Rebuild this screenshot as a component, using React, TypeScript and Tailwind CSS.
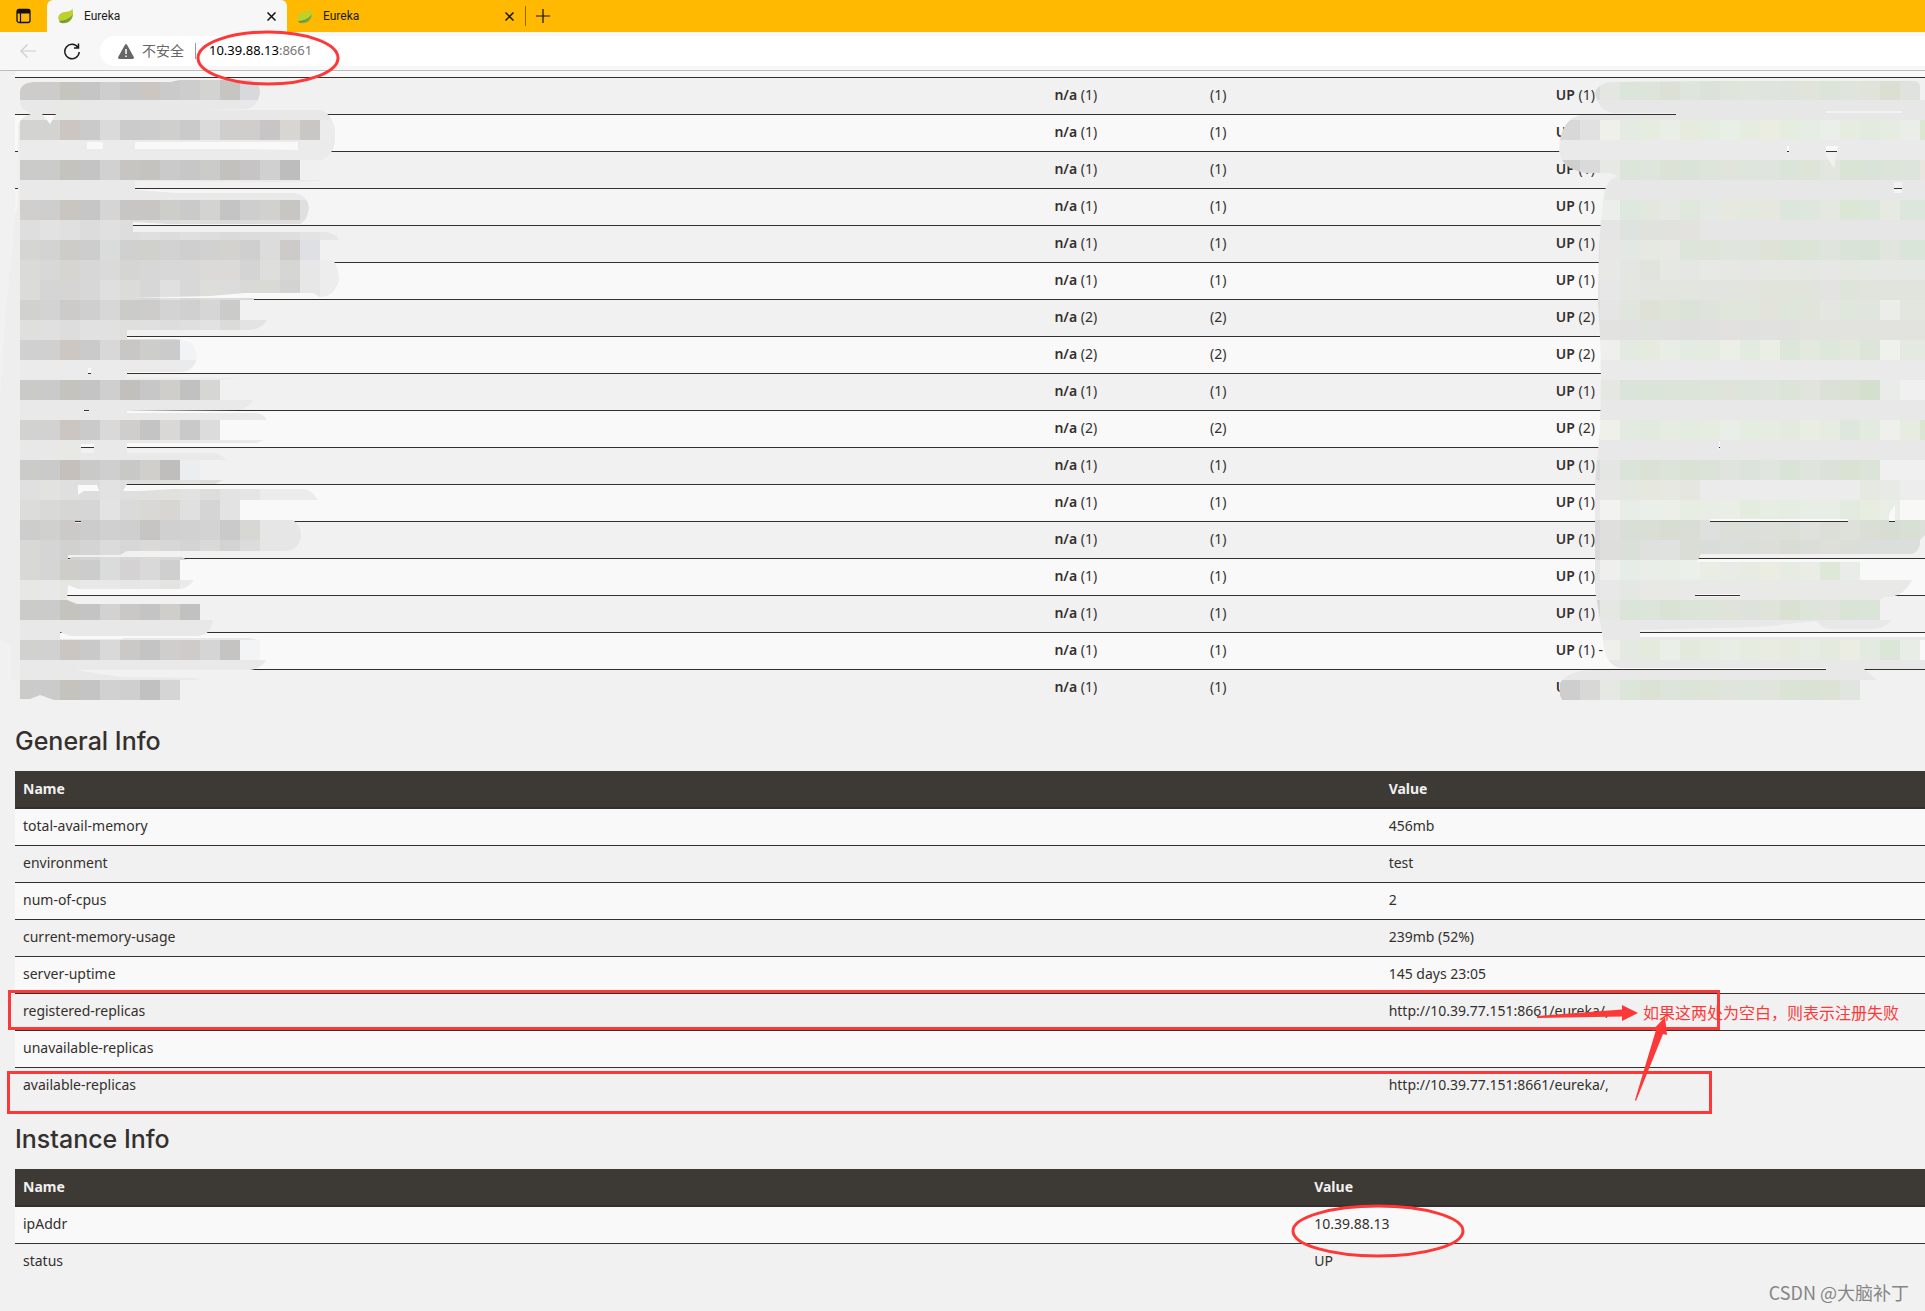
import type { ReactNode } from "react";

const instances = [1, 1, 1, 1, 1, 1, 2, 2, 1, 2, 1, 1, 1, 1, 1, 1, 1];

const generalInfo = [
  ["total-avail-memory", "456mb"],
  ["environment", "test"],
  ["num-of-cpus", "2"],
  ["current-memory-usage", "239mb (52%)"],
  ["server-uptime", "145 days 23:05"],
  ["registered-replicas", "http://10.39.77.151:8661/eureka/,"],
  ["unavailable-replicas", ""],
  ["available-replicas", "http://10.39.77.151:8661/eureka/,"],
];

const instanceInfo = [
  ["ipAddr", "10.39.88.13"],
  ["status", "UP"],
];

// One line per 20px band, starting at y = 80. The last colour runs on to the edge.
const namesMosaic = [
  "cdcccb cdcccb c5c4be c5c5c5 cecece c7c7c7 cbc6c2 cacaca cdcdcd d3d3d1 c7c5c2 d7d9dc",
  "e8e8e8 e8e8e8 e8e8e5 e8e8e8",
  "d3d3d2 d3d3d2 ccc6c2 cacaca dadada cbcbcb cccccc cfcfcd cacaca dadada cfcecc cfcecc c8c5c7 d7d6d3 c9c7c5 ececec",
  "ebebeb",
  "cbcbc9 cbcbca c5c3bd c4c4c4 d1d1d1 c6c5c2 c4c3c0 cacaca c7c7c7 cbcbca c3c1bd c7c4c6 d0d0d0 bdbdbd f0f0f0",
  "e9e9e9",
  "d0cfcd cecece c9c5c1 c6c6c6 d5d5d5 c8c6c4 c8c6c4 cdcdca cacaca d3d3d2 c4c4c4 cecece d1d1d0 c7c6c3 dddfe1",
  "dedede e2e2e2 e0e0e0 dcdcdc e0e0e0 dddddd dfdfdf dcdcdc dfdfdf dddddd dadada dcdcdc dddddd dedede e3e3e3 e6e6e6",
  "d5d5d4 d3d3d3 cdccc9 cdcdcd d9dcdb d0d0d0 d0d0cd d2d2d2 cfcfcf d1d1d1 d4d2ce cfcfcf dddcdd cdcbc9 dfe0e3 f0f0f0",
  "dadad8 d8d8d8 d7d5d2 d7d7d7 dadada d5d5d4 d7d7d7 d8d8d8 d8d8d8 dbdad9 dbdad9 d4d4d4 dededd d6d6d5 e7e7e7 ededed",
  "dbdbd9 d5d5d5 d6d5d3 d7d7d7 dfdfdf dbdbda d7d7d7 e0e0e0 d8d8d8 ddddda dcdcdc d9d9d5 d9d9d6 d3d3d3 e7e7e7 ededed",
  "d1d1cf d3d3d3 cdcbc9 cfcfcf d7d7d7 cbcbc8 cdccca d3d3d3 d0d0d0 d6d6d6 cbcbc9 dcdcdc",
  "dfdfde e0e0e0 dddddd e1e1e1 e1e1e1 dfdfde e0e0e0 dddddd dfdfdf e2e2e2 dbdbd9 e3e3e3",
  "d0d0d0 d0d0d0 cdc7c4 cacaca d8d8d8 c8c7c5 cdcdcc cbcbcb f1f3f5",
  "ebebeb",
  "cacac8 cacaca c4c3bd c4c4c4 cfcfcf c2c0bd c7c7c7 d0cecb c1c1c1 d6d6d4",
  "e9e9e9",
  "d2d2d1 d2d2d2 ccc6c3 cacaca d9d9d9 cfcecc c4c4c4 d9d8d6 c9c9c9 dcdcdc",
  "e8e8e8 e8e8e8 e8e8e5 e9e9e9",
  "cbcbca cacaca c6c0bd c9c9c8 cfcfcf c8c8c6 d0cfcc bfbebc ebedef",
  "e0e0e0 e2e2e0 dfdfdf dddddd e2e2e2 dfdfdf dfdfde e0e0dc e2e2e2 dddddb e3e3e3 e5e5e5 ececec",
  "dcdcdb d9d9d8 d6d6d4 d6d6d6 e3e3e3 dadada d9d8d5 d7d6d3 e0e0e0 d5d5d5 e3e3e3",
  "cdcdcd d0d0ce cbcac8 cccccc d0d0d0 cfcfcf c7c5c3 d0d0d0 d1d1d1 d3d3d3 cacaca d7d7d4 e6e6e6",
  "d8d8d6 d5d5d5 d1d1cf d4d4d4 dbdbdb d7d7d7 dad9d7 d7d7d7 d4d4d4 d9d9d7 d3d3d3 dcdcdc e6e6e6",
  "d8d8d6 d5d5d5 cecdca cccccc dadcdb d4d2d2 d9d9d9 cfcfcf",
  "e7e7e6 e8e8e8 e5e5e2 e8e8e8 e8e8e8 e6e6e6 e7e7e7 e3e3e1 eaeaea",
  "cbcbca cbcbcb c4c3bd c4c4c4 d2d2d2 c9c8c6 c4c4c4 cfcecb c1c1c1",
  "e8e8e8",
  "d1d1d0 d1d1d1 ccc6c3 c9c9c9 d9d9d9 cac9c7 c4c4c4 cfcecc cecbc9 d5d5d5 c5c4c2 f3f4f6",
  "e9e9e9",
  "cbcbc9 cbcbcb c4c3bd c4c4c4 d1d1d1 cfcfcf c1c1c1 d5d5d5",
];

const statusMosaic = [
  "dadada dadada e3e6e1 dbe5d9 dde5db dbe1d4 dde5dc dbe2d9 dfe5db e0e5dd dfe4de dee4dc e0e4d9 dce4d9 dfe5dd e0e3da dadfd2 dee3dd",
  "e7e7e7",
  "d8d8d8 e1e1e1 f0f0eb e4ebe2 e7ece0 e9efe7 e6ebde e5ece2 e8efe7 e6ede0 eaede0 e5ece0 e6ede4 eaefe9 e6ece0 e3ebe1 e7ece3 ebeee8 dde6d3",
  "eaeaea",
  "cfcfcf dadada e7e9e4 dce5da dde5dc dde2d7 dae3d8 dde5da e0e4db dee5dc dfe5de dbe4d9 dee4d8 e1e6df dae4d4 d9e3d8 dce4da dce4dc e8e6df",
  "e7e7e7",
  "eaeaea eaeaea ebeeeb dfe8df e3e8df e6e9e3 e0e7dc e5e9e3 e7e9e0 e3e9df e6e8df dce6dd dee6dd e4e8e1 dbe6d5 dde6da e7eae3 dce6dc",
  "e6e6e6 e6e6e6 e5e5e6 dfe3df e0e2dd e1e2de e3e2df e6e6e6",
  "e1e1e1 e1e1e1 e7e8e6 e3e8e2 e6e9e1 e8e9e4 dde5db dee4da e0e5dd dfe5dc dfe3d7 d9e3d6 dbe4d7 dfe5dd dae3d7 d7e3d6 e1e5dd dae5da",
  "e5e5e5 e5e5e5 e8e8e7 e3e6e1 e0e4dd e6e8e3 e5e8e2 e6e9e4 e7e8e4 e6e7e4 e6e8e3 e7e8e4 e5e7e3 e7e7e5 e5e8e1 e6e8e4",
  "e2e2e2 e2e2e2 e6e7e6 e3e6e1 e3e6e0 e3e6e0 e2e6df e1e4df e2e5df e2e4dd e0e4db e0e4da e0e4dc e3e4e2 dfe4da e0e4dc",
  "dededc dededc e5e5e5 e0e5de dfe1d7 dfe4d8 dbe2d7 dee4dc e0e6da e1e6dd e3e3dc dee5db dfe5da e4e6e2 dfe6dc e0e6dd ebeee8 e2e6de",
  "dcdcdc dcdcdc e2e2e1 e1e2df e0e2de e0e1df dfdfde e0e1df e2e1df e0e1df e1e1df e0e0dd e2e2df",
  "e3e3e3 e3e3e3 efefeb e3eae2 e6ebdf e8ede6 e3ebe2 e5ebe0 ebefe7 e3eae0 ebeee5 dde6da e3e9df dee7dc e3e8dc dde5da eff1ed e4eae1",
  "eaeaea",
  "e3e3e3 e3e3e3 e5e7e3 dbe4da dbe4d9 dce3d8 dce4da dde4da dfe3d9 dde4dc dfe4dd dce3d8 e0e4dd dbe1d6 dae0d3 d5dfce eaece9 f0f0f0",
  "e8e8e8",
  "e8e8e8 e8e8e8 f0f0eb e3eae2 e2eae0 e7ece2 e4ebe0 e7ece0 e9eee8 e5ece0 e6ece1 e4eae0 eaede1 e7ece3 dde7dd e3eae0 eff0ec e7ece1 dce5d2",
  "e8e8e8",
  "dcdcdc dcdcdc e4e6e3 dae4d9 dbe2d5 dce3d8 dae2d6 dbe3d8 e0e4de dce2dc e1e5df dae3d8 dfe4dd dce2d9 d9e2d3 dce3d8 f0f0f0",
  "e6e6e6 e6e6e6 e7e7e5 e5e8e1 e6e7df e8e8e3 e5e6e0 ebebeb ebebeb ececec ececec ececec ececec ececec ececec e6e8e2 e8eae5 ededed",
  "e9e9e9 e9e9e9 f2f2f0 e8ede7 ebefe9 ecefe7 e8ede4 e8ede5 ebeee7 e4ebdf e8ede4 e5ece2 e8ede5 e8ede5 e3eadf e7ede1 e9eee7 f8f9f7",
  "d9d9d9 d9d9d9 dfdfde d9dfd7 dadfd6 d8ddd3 d8ddd6 dde0dc dbdfd8 dbdfd9 dde0da dadfd7 dfe1dd dbdfd8 dee0da dadfd6 d8ddd3 d8dfd5 dee0da",
  "d9d9d9 d9d9d9 dededd dadfd7 dfe1df e0e2e0 dadcd6 dadcd9 dbdeda dbddd9 dddeda d9dcd3 dbddd8 dedfdb dbded6 dbdeda",
  "e6e6e6 e6e6e6 efefed e6ede6 eaeee9 e9eee6 ecf0ea e8eee4 e7ede6 e6ece1 ebede2 e6ece1 e9ede6 dfe7d9 e8eee7 f0f1ee",
  "e6e6e6 e6e6e6 e8e8e8 e5e7e5 e8e8e5 e8e8e5 e9e9e8",
  "d5d5d5 d5d5d5 e4e7e2 dbe4d9 dde4d9 dae2d6 dce4da dde4da dfe3da dde3dc dfe3d9 dae1d3 dde4d9 e1e4dc d9e3d6 dbe4d8 f0f0f0",
  "e8e8e8",
  "eaeaea eaeaea efefeb e4eae1 e4ebdd eaefe8 e3eadc e6ece0 e8ede5 e7ece1 e9ece1 e5ecdf e8ede3 e4ebde ebece2 e3eadf dbe5d8 e8ede6",
  "e8e8e8",
  "cecece d8d8d7 e6e8e4 dbe5d9 dbe1d4 dde4db dce3d8 dfe4d9 e1e4dc dde5dc e0e4dc dbe2d6 d9e2d4 dce2d4 e0e5df",
];

// Outline of the brush strokes, with the unpainted notches left out
const namesOutline =
  "M20 92Q20 83 34 82L170 82L180 80H250Q260 82 260 92Q258 108 245 109L200 110H320Q330 112 335 128V142Q333 155 322 160H320V181L280 182L135 181V190L176 193H295Q308 196 309 208Q307 222 300 224L170 224L133 222V232H325Q335 233 339 240H320V260H333Q339 268 339 280Q335 297 320 297L313 293H245L210 296L129 298L254 298V300H240V320H267Q262 329 250 330H127V339H177L190 342Q197 350 197 358Q194 371 182 372H127V378H240L220 380V400H253Q248 408 240 410L127 411V413H255Q264 414 267 420H220V440H264L257 443H127V453H215Q223 455 226 460H200V480H223L215 484H127L123 491H140L173 489H305Q314 492 318 500H240V520H293Q301 526 301 536Q299 551 284 551H127L120 555H68V560L72 557H182L187 560H180V580H194Q188 589 178 589H78L68 585L67 600L77 604H200V620H213Q211 635 198 636H70L60 632V639H123V638H250L258 640H260V660H266Q262 668 250 670H75L120 677L195 678L200 680H180V700H54L40 695L30 699H20V680H11V645L0 640V400L2 370L5 320L13 240L15 215L18 205V125Q22 116 31 114L22 108Q20 105 20 98Z" +
  "M42 114H56L50 124Z M87 142H103V149H87Z M135 142H298V150L240 149H135Z M88 368H91V374H88Z M84 410H89V412H84Z M81 444H94V453H81Z M78 485H97L99 491H84L78 495Z M75 521H81V523H75Z";

const statusOutline =
  "M1595 92Q1600 82 1612 82L1720 81H1915Q1920 82 1920 86V100H1925V554H1701L1697 562H1860V580H1912Q1905 595 1890 597H1884L1880 600V620H1891Q1885 629 1870 629H1830Q1820 628 1817 621L1760 627L1640 630V637H1925V640H1920V660H1925V669H1864L1877 680H1860V700H1562Q1558 692 1560 683Q1568 671 1590 670H1826V668H1620Q1605 665 1603 640L1600 620L1595 590V485L1597 460L1600 430L1601 380L1600 335L1598 300L1599 245L1601 220L1604 195Q1606 180 1618 176L1610 173H1585Q1560 168 1559 150Q1560 120 1580 115H1676V113H1612Q1598 110 1595 92Z" +
  "M1787 146H1789V153H1787Z M1826 146H1838L1834 168L1826 156Z M1894 182H1902V193H1894Z M1719 441H1720V450H1719Z M1710 519H1848V522H1710Z M1889 522V514L1895 505V522Z M1695 594H1740V597H1695Z M1826 111H1902V113H1826Z M1920 540L1925 535V554H1912Q1918 552 1920 545Z";

function Mosaic({ id, x, end, bands, outline }: { id: string; x: number; end: number; bands: string[]; outline: string }) {
  return (
    <g clipPath={`url(#${id})`}>
      <clipPath id={id}>
        <path d={outline} clipRule="evenodd" />
      </clipPath>
      <rect x={x - 20} y="80" width="20" height="620" fill="#eeeeee" />
      {bands.map((band, row) => {
        const cells = band.split(" ");
        return cells.map((color, i) => (
          <rect
            key={`${row}-${i}`}
            x={x + i * 20}
            y={80 + row * 20}
            width={i === cells.length - 1 ? end - x - i * 20 : 20}
            height="20"
            fill={`#${color}`}
            shapeRendering="crispEdges"
          />
        ));
      })}
    </g>
  );
}

function Annotations() {
  return (
    <svg width="1925" height="1311" viewBox="0 0 1925 1311" className="absolute left-0 top-0 pointer-events-none max-w-none" aria-hidden="true">
      <Mosaic id="names" x={20} end={345} bands={namesMosaic} outline={namesOutline} />
      <Mosaic id="status" x={1560} end={1925} bands={statusMosaic} outline={statusOutline} />
      <g fill="none" stroke="#fd3838" strokeWidth="3">
        <ellipse cx="268" cy="58" rx="70" ry="26" />
        <ellipse cx="1378" cy="1231" rx="85" ry="25" />
        <rect x="9.5" y="991.5" width="1709" height="37" />
        <rect x="8.5" y="1072.5" width="1702" height="40" />
      </g>
      <g fill="#fd3838">
        <path d="M1537 1016L1622 1009.500V1005L1638 1013L1622 1021V1016.500L1537 1018Z" />
        <path d="M1635 1100L1656 1030L1652 1031L1665 1017L1667 1035L1663 1034L1636 1101Z" />
      </g>
    </svg>
  );
}

function Leaf() {
  return (
    <svg width="16" height="16" viewBox="0 0 16 16" aria-hidden="true">
      <path d="M14.500 0.500C13.500 3 11 3.500 7 4C2 4.700 0 7.500 0.300 10.500C0.500 13 2.500 15 6 15C12 15 16.500 10 14.500 0.500Z" fill="#c0cf2a" />
      <path d="M1.500 13.700C7 13.500 12 11 15 6C14.500 11.500 11 15.300 6 15.300C4 15.300 2.500 14.700 1.500 13.700Z" fill="#8cab2c" />
      <path d="M1 13C6.500 13.200 11 11 14 7.500C12 12 7 14.500 2.500 14.500Z" fill="#5f9a46" />
    </svg>
  );
}

function Close() {
  return (
    <svg width="9" height="9" viewBox="0 0 9 9" stroke="#111" strokeWidth="1.500" aria-hidden="true">
      <path d="M0.500 0.500L8.500 8.500M8.500 0.500L0.500 8.500" />
    </svg>
  );
}

function Tab({ active }: { active?: boolean }) {
  return (
    <div className={`flex h-8 items-center pr-[11px] font-['Roboto',sans-serif] text-xs text-[#1b1b1b] ${active ? "w-60 rounded-t-md bg-[#f7f7f7] pl-[11px]" : "w-[238px] pl-[10px]"}`}>
      <Leaf />
      <span className="ml-[10px] flex-1">Eureka</span>
      <button aria-label="Close tab">
        <Close />
      </button>
    </div>
  );
}

function BrowserBar() {
  return (
    <header className="font-['Noto_Sans','Noto_Sans_CJK_SC',sans-serif]">
      <div className="flex h-8 items-center bg-[#ffb900]">
        <button className="flex w-[47px] justify-center" aria-label="Tab actions">
          <svg width="15" height="16" viewBox="0 0 15 16" fill="none" stroke="#111" aria-hidden="true">
            <rect x="1" y="1.500" width="13" height="13" rx="2" strokeWidth="1.300" />
            <path d="M1 3.500H14" strokeWidth="4" />
            <path d="M4.500 5V14" strokeWidth="1.200" />
          </svg>
        </button>
        <Tab active />
        <Tab />
        <span className="h-5 w-px bg-[#8a6500]" />
        <button className="ml-[10px]" aria-label="New tab">
          <svg width="14" height="14" viewBox="0 0 14 14" stroke="#111" strokeWidth="1.200" aria-hidden="true">
            <path d="M7 0V14M0 7H14" />
          </svg>
        </button>
      </div>
      <div className="flex h-[39px] items-center border-b border-[#bdbdbd] bg-[#f7f7f7]">
        <button className="ml-5" aria-label="Back">
          <svg width="16" height="14" viewBox="0 0 16 14" fill="none" stroke="#cdcdcd" strokeWidth="1.200" aria-hidden="true">
            <path d="M16 7H1M7.500 0.500L1 7L7.500 13.500" />
          </svg>
        </button>
        <button className="ml-7" aria-label="Refresh">
          <svg width="16" height="17" viewBox="0 0 16 17" fill="none" stroke="#1b1b1b" strokeWidth="1.500" aria-hidden="true">
            <path d="M14 4.500A7.200 7.200 0 1 0 15.200 9M14.500 0.500V5H10" />
          </svg>
        </button>
        <div className="ml-5 flex h-[30px] flex-1 items-center rounded-l-full bg-white pl-[18px]">
          <svg width="16" height="15" viewBox="0 0 16 15" aria-hidden="true">
            <path d="M7 0.800Q8 -0.600 9 0.800L15.800 13Q16.300 14.700 14.800 15H1.200Q-0.300 14.700 0.200 13Z" fill="#666" />
            <path d="M8 5V10M8 11.500V13" stroke="#fff" strokeWidth="1.500" />
          </svg>
          <span className="ml-2 text-sm text-[#666]">不安全</span>
          <span className="ml-[11px] h-4 w-px bg-[#9a9a9a]" />
          <div className="ml-[13px] text-[13px] text-black">
            10.39.88.13<span className="text-[#777]">:8661</span>
          </div>
        </div>
      </div>
    </header>
  );
}

function Heading({ children }: { children: ReactNode }) {
  return <h1 className="pt-[22px] pb-[17px] font-['Inter',sans-serif] text-[25px] leading-[26px] font-medium">{children}</h1>;
}

function InfoTable({ rows, nameWidth }: { rows: string[][]; nameWidth: string }) {
  return (
    <table className="w-full table-fixed border-separate border-spacing-0 text-left">
      <thead>
        <tr className="h-[38px] bg-[#3d3934] text-[#f1f1f1] *:border-b-2 *:border-[#34302d] *:px-2 *:pb-px">
          <th className={nameWidth}>Name</th>
          <th>Value</th>
        </tr>
      </thead>
      <tbody>
        {rows.map(([name, value]) => (
          <tr
            key={name}
            className="h-[37px] odd:bg-[#f9f9f9] first:h-9 *:border-t *:border-[#34302d] *:px-2 *:pb-0.5 first:*:border-t-0"
          >
            <td>{name}</td>
            <td>{value}</td>
          </tr>
        ))}
      </tbody>
    </table>
  );
}

export default function App() {
  return (
    <div className="relative min-h-screen overflow-x-clip bg-[#f1f1f1]">
      <BrowserBar />
      <main className="pl-[15px] font-['Noto_Sans',sans-serif] text-sm leading-5 text-[#34302d]">
        <div className="h-[6px] bg-[#f9f9f9]" />
        <table className="w-full table-fixed border-separate border-spacing-0 text-left">
          <colgroup>
            <col className="w-[54%]" />
            <col className="w-[8.15%]" />
            <col className="w-[18.1%]" />
            <col />
          </colgroup>
          <tbody>
            {instances.map((count, i) => (
              <tr key={i} className={`h-[37px] *:border-t *:border-[#34302d] *:px-2 *:pb-0.5 ${i === 3 ? "bg-[#f5f5f5]" : "even:bg-[#f9f9f9]"}`}>
                <td></td>
                <td>
                  <b className="font-semibold">n/a</b> ({count})
                </td>
                <td>({count})</td>
                <td>
                  <b className="font-semibold">UP</b> ({count}){i === 15 && " -"}
                </td>
              </tr>
            ))}
          </tbody>
        </table>
        <Heading>General Info</Heading>
        <InfoTable rows={generalInfo} nameWidth="w-[71.5%]" />
        <Heading>Instance Info</Heading>
        <InfoTable rows={instanceInfo} nameWidth="w-[67.6%]" />
      </main>
      <Annotations />
      <p className="absolute left-[1643px] top-[1000px] font-['Noto_Sans_CJK_SC',sans-serif] text-base whitespace-nowrap text-[#fd3838]">
        如果这两处为空白，则表示注册失败
      </p>
      <p className="absolute right-4 bottom-[5px] font-['Noto_Sans_CJK_SC',sans-serif] text-lg text-[#858585]">
        CSDN @大脑补丁
      </p>
    </div>
  );
}
